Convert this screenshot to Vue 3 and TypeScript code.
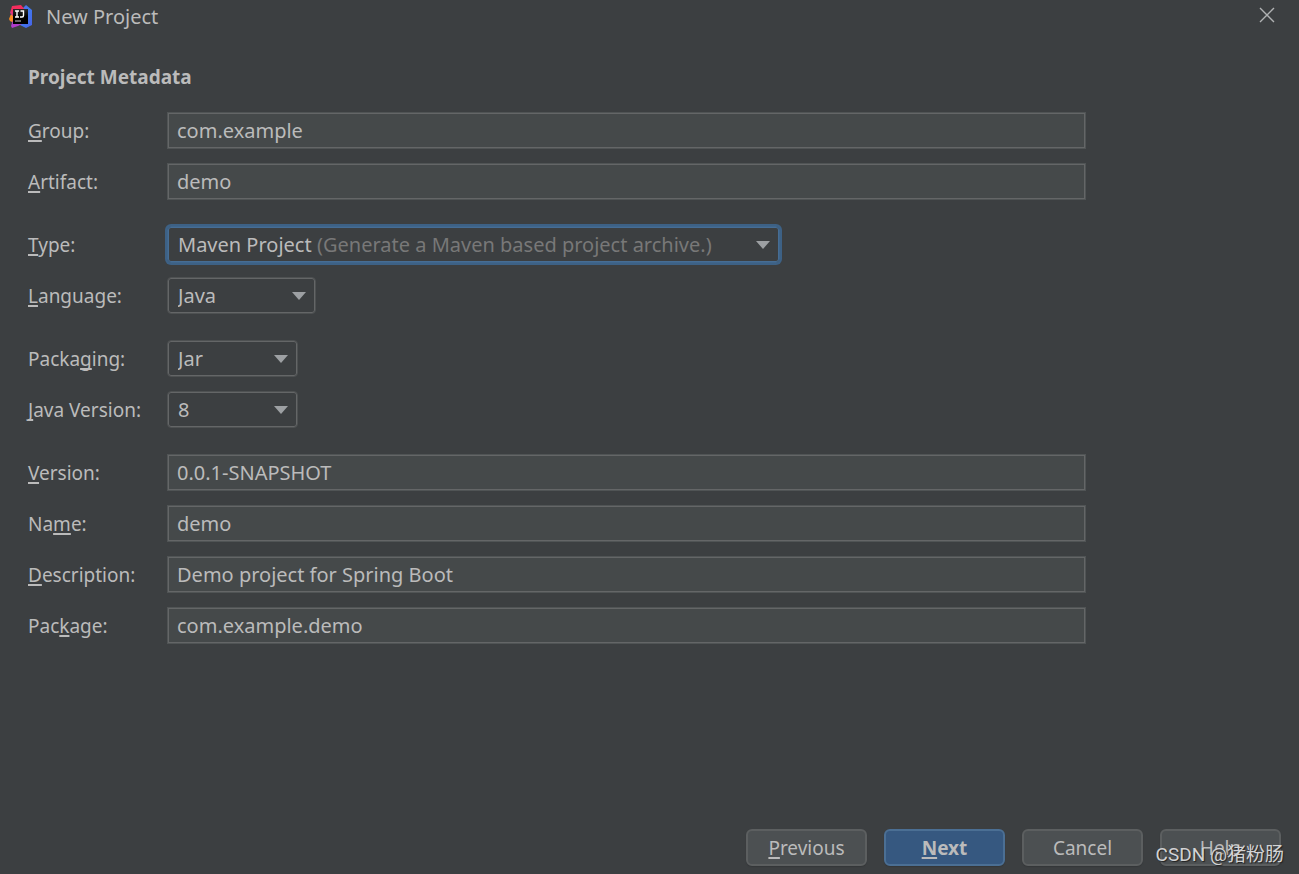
<script setup lang="ts">
import { reactive } from 'vue'

interface Field {
  id: string
  before: string
  key: string
  after: string
  kind: 'text' | 'select'
  size?: 'wide' | 'medium' | 'small'
  options?: string[]
  hint?: string
}

const groups: Field[][] = [
  [
    { id: 'group', before: '', key: 'G', after: 'roup:', kind: 'text' },
    { id: 'artifact', before: '', key: 'A', after: 'rtifact:', kind: 'text' },
  ],
  [
    {
      id: 'type', before: '', key: 'T', after: 'ype:', kind: 'select', size: 'wide',
      options: ['Maven Project'], hint: '(Generate a Maven based project archive.)',
    },
    { id: 'language', before: '', key: 'L', after: 'anguage:', kind: 'select', size: 'medium', options: ['Java'] },
  ],
  [
    { id: 'packaging', before: 'Packa', key: 'g', after: 'ing:', kind: 'select', size: 'small', options: ['Jar'] },
    { id: 'javaVersion', before: '', key: 'J', after: 'ava Version:', kind: 'select', size: 'small', options: ['8'] },
  ],
  [
    { id: 'version', before: '', key: 'V', after: 'ersion:', kind: 'text' },
    { id: 'name', before: 'Na', key: 'm', after: 'e:', kind: 'text' },
    { id: 'description', before: '', key: 'D', after: 'escription:', kind: 'text' },
    { id: 'package', before: 'Pac', key: 'k', after: 'age:', kind: 'text' },
  ],
]

const form = reactive<Record<string, string>>({
  group: 'com.example',
  artifact: 'demo',
  type: 'Maven Project',
  language: 'Java',
  packaging: 'Jar',
  javaVersion: '8',
  version: '0.0.1-SNAPSHOT',
  name: 'demo',
  description: 'Demo project for Spring Boot',
  package: 'com.example.demo',
})
</script>

<template>
  <div class="dialog">
    <header class="titlebar">
      <svg class="logo" viewBox="0 0 24 24" aria-hidden="true">
        <defs>
          <linearGradient id="edge" x1="0" y1="0" x2="1" y2="1">
            <stop offset="0" stop-color="#7a5be0" />
            <stop offset="0.4" stop-color="#3d7df0" />
            <stop offset="1" stop-color="#4a62e8" />
          </linearGradient>
          <linearGradient id="flame" x1="1" y1="0" x2="0.2" y2="1">
            <stop offset="0" stop-color="#fb2a5c" />
            <stop offset="0.6" stop-color="#f0305f" />
            <stop offset="1" stop-color="#a83fd0" />
          </linearGradient>
          <linearGradient id="tile" x1="0" y1="0" x2="0" y2="1">
            <stop offset="0" stop-color="#2c2c2c" />
            <stop offset="0.5" stop-color="#000" />
          </linearGradient>
        </defs>
        <path d="M13 4 17 0 23 5V20L17 23 11 20Z" fill="url(#edge)" />
        <path d="M0 14 2 9 7 13 5 18 1 16Z" fill="#f98a22" />
        <path d="M3 1 12 0 16 5 14 12 8 18 4 17 4 11 1 8Z" fill="url(#flame)" />
        <path d="M4 15 13 19 9 21 3 23 2 21Z" fill="#b13bcb" />
        <rect x="4" y="4" width="15" height="15" fill="url(#tile)" />
        <path d="M6 6H10M8 6V12M6 12H10M11.5 6H14.5V10.5Q14.5 12 13 12H11" fill="none" stroke="#fff" stroke-width="1.4" />
        <path d="M6 16H12" stroke="#aaa" stroke-width="1.2" />
      </svg>
      <h1 class="title">New Project</h1>
      <button class="close" type="button" aria-label="Close">
        <svg viewBox="0 0 16 16" aria-hidden="true">
          <path d="M1 1 15 15M15 1 1 15" fill="none" stroke="#b0b2b3" stroke-width="1.4" />
        </svg>
      </button>
    </header>

    <form id="metadata" class="form" @submit.prevent>
      <h2 class="heading">Project Metadata</h2>
      <div v-for="(fields, g) in groups" :key="g" class="group">
        <div v-for="f in fields" :key="f.id" class="row">
          <label :for="f.id">{{ f.before }}<u>{{ f.key }}</u>{{ f.after }}</label>
          <input v-if="f.kind === 'text'" :id="f.id" v-model="form[f.id]" class="text" type="text" spellcheck="false" />
          <div v-else class="combo" :class="f.size">
            <select :id="f.id" v-model="form[f.id]">
              <option v-for="o in f.options" :key="o" :value="o">{{ o }}</option>
            </select>
            <span v-if="f.hint" class="hint">{{ f.hint }}</span>
            <svg class="arrow" viewBox="0 0 14 8" aria-hidden="true"><path d="M0 0H14L7 8Z" fill="#9da0a3" /></svg>
          </div>
        </div>
      </div>
    </form>

    <footer class="actions">
      <button type="button"><u>P</u>revious</button>
      <button class="primary" type="submit" form="metadata"><u>N</u>ext</button>
      <button type="button">Cancel</button>
      <button type="button">Help</button>
      <span class="credit">CSDN @猪粉肠</span>
    </footer>
  </div>
</template>

<style>
body {
  background: #3c3f41;
}
</style>

<style scoped>
.dialog,
.dialog * {
  box-sizing: border-box;
}

.dialog {
  display: flex;
  flex-direction: column;
  min-height: 100vh;
  background: #3c3f41;
  color: #bbbbbb;
  font-family: "Noto Sans", "Open Sans", "Noto Sans CJK SC", sans-serif;
  font-size: 19px;
  line-height: 28px;
}

.titlebar {
  display: flex;
  align-items: center;
  height: 34px;
  padding: 0 24px 0 9px;
}

.logo {
  width: 24px;
  height: 24px;
  margin-right: 13px;
}

.title {
  flex: 1;
  margin: 0;
  font-size: 20px;
  font-weight: 400;
}

.close {
  display: grid;
  place-items: center;
  width: 16px;
  height: 16px;
  margin-bottom: 4px;
  padding: 0;
  border: 0;
  background: none;
}

.close svg {
  width: 16px;
  height: 16px;
}

.form {
  display: flex;
  flex: 1;
  flex-direction: column;
  gap: 26px;
  padding: 29px 213px 24px 28px;
}

.heading {
  margin: 0 0 -5px;
  font-size: 19px;
  font-weight: 700;
}

.group {
  display: flex;
  flex-direction: column;
  gap: 14px;
}

.row {
  display: grid;
  grid-template-columns: 139px 1fr;
  align-items: center;
}

u {
  text-decoration-thickness: 2px;
  text-underline-offset: 2px;
  text-decoration-skip-ink: none;
}

.text,
select,
.actions button {
  color: inherit;
  font: inherit;
  outline: none;
}

.text {
  width: 100%;
  height: 37px;
  padding: 0 9px;
  border: 1px solid #505455;
  background: #45494a;
  box-shadow: inset 0 0 0 1px #646667;
  font-size: 20px;
}

.combo {
  position: relative;
  height: 37px;
  font-size: 20px;
}

.combo.wide {
  width: 613px;
}

.combo.medium {
  width: 149px;
}

.combo.small {
  width: 131px;
}

select {
  width: 100%;
  height: 37px;
  padding: 0 32px 0 10px;
  border: 1px solid #4e5152;
  border-radius: 4px;
  background: #3c3f41;
  box-shadow: inset 0 0 0 1px #646667;
  appearance: none;
}

.wide select {
  border-color: #3f658b;
  box-shadow: inset 0 0 0 1px #466d94, 0 0 0 2px #3d6185;
}

.hint {
  position: absolute;
  top: 5px;
  left: 150px;
  line-height: 27px;
  color: #787878;
  pointer-events: none;
}

.arrow {
  position: absolute;
  top: 15px;
  right: 10px;
  width: 14px;
  height: 8px;
  pointer-events: none;
}

.actions {
  position: relative;
  display: flex;
  justify-content: flex-end;
  gap: 17px;
  padding: 0 18px 8px;
}

.actions button {
  width: 121px;
  height: 37px;
  padding: 0;
  border: 2px solid #5c5f60;
  border-radius: 6px;
  background: #4c5052;
  box-shadow: 0 1px 1px #343739;
}

.actions .primary {
  border-color: #4b6f94;
  background: #365880;
  font-weight: 700;
}

.credit {
  position: absolute;
  right: 15px;
  bottom: 5px;
  color: #d2d3d4;
  font-family: Roboto, "Noto Sans CJK SC", sans-serif;
  font-size: 19px;
  text-shadow: 1px 1px 1px #222;
  pointer-events: none;
}
</style>
